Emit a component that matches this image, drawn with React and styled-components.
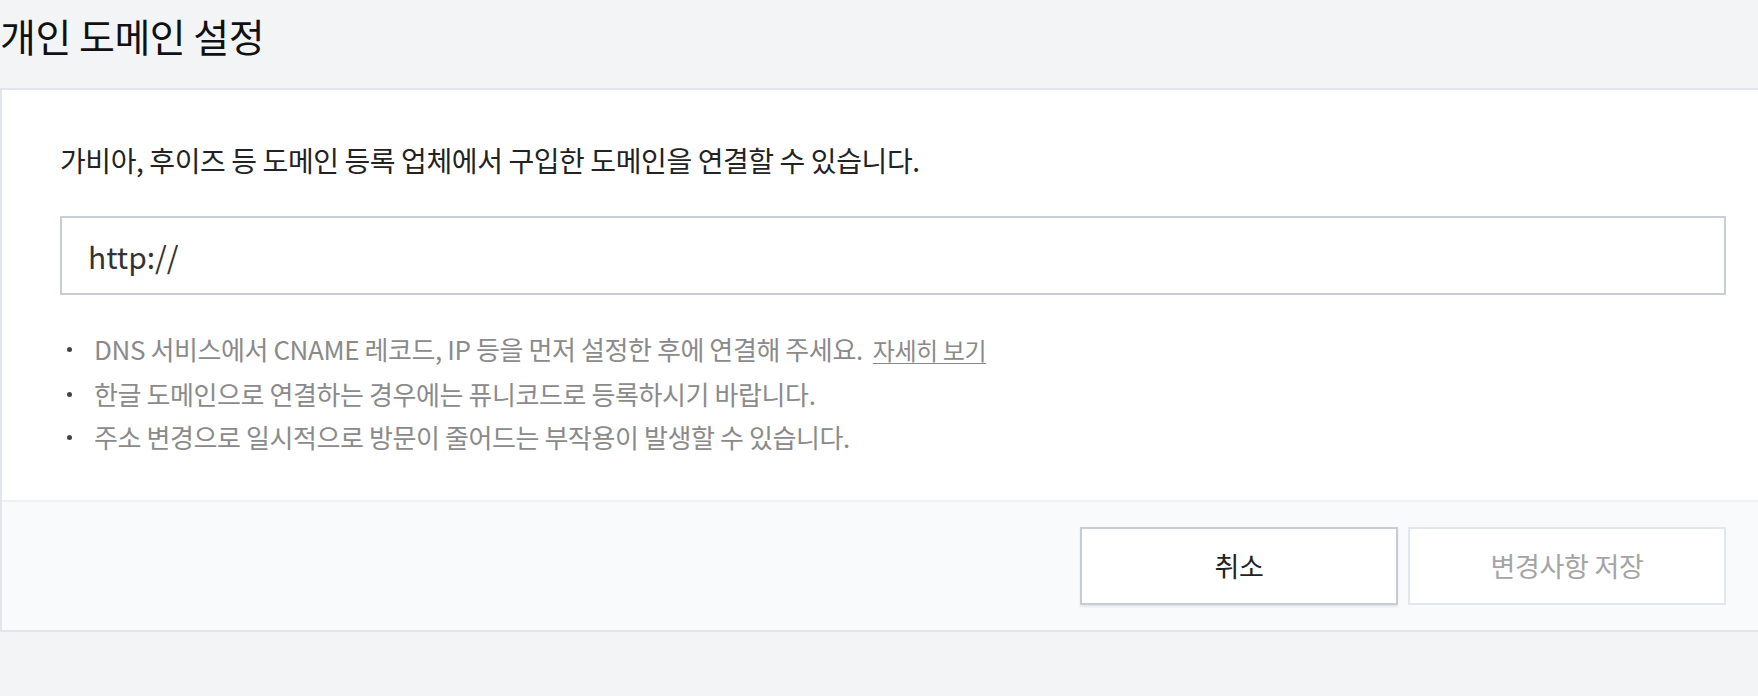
import React from 'react'
import styled, { createGlobalStyle } from 'styled-components'

const GlobalStyle = createGlobalStyle`
  html, body {
    margin: 0;
    padding: 0;
    background: #f3f4f6;
    font-family: "Noto Sans CJK KR", "Noto Sans", sans-serif;
    color: #222;
  }
  * { box-sizing: border-box; }
`

const Page = styled.div`
  width: 100%;
  min-height: 696px;
`

const Title = styled.h1`
  margin: 0;
  height: 88px;
  padding-top: 8px;
  font-size: 39px;
  font-weight: 400;
  line-height: 54px;
  letter-spacing: -0.5px;
  color: #111;
`

const Card = styled.section`
  background: #fff;
  border: 2px solid #e1e5ec;
  border-right: none;
`

const Body = styled.div`
  padding: 51px 32px 41px 58px;
  border-bottom: 2px solid #eef0f4;
`

const Lead = styled.p`
  margin: 0 0 37px;
  font-size: 28px;
  line-height: 38px;
  letter-spacing: -0.4px;
  color: #222;
`

const UrlInput = styled.input`
  display: block;
  width: 100%;
  height: 79px;
  padding: 0 26px;
  border: 2px solid #c8ced8;
  border-radius: 0;
  outline: none;
  font-family: inherit;
  font-size: 30px;
  color: #333;
  background: #fff;

  &::placeholder {
    color: #333;
  }
`

const Notes = styled.ul`
  list-style: none;
  margin: 32px 0 0;
  padding: 0;
`

const Note = styled.li`
  position: relative;
  padding-left: 34px;
  font-size: 26px;
  line-height: 43.5px;
  letter-spacing: -0.4px;
  color: #8a8a8a;

  &::before {
    content: '';
    position: absolute;
    left: 7px;
    top: 20px;
    width: 5px;
    height: 5px;
    border-radius: 50%;
    background: #444;
  }
`

const MoreLink = styled.a`
  margin-left: 10px;
  font-size: 24px;
  color: #8a8a8a;
  text-decoration: underline;
  text-decoration-thickness: 1px;
  text-underline-offset: 3px;
  cursor: pointer;
`

const Footer = styled.div`
  display: flex;
  justify-content: flex-end;
  gap: 10px;
  padding: 25px 32px 25px 0;
  background: #f9fafb;
`

const Button = styled.button`
  width: 318px;
  height: 78px;
  background: #fff;
  border: 2px solid ${p => (p.$primary ? '#c5ccd6' : '#e2e6ee')};
  box-shadow: ${p => (p.$primary ? '0 2px 2px rgba(0,0,0,0.08)' : 'none')};
  font-family: inherit;
  font-size: 27px;
  letter-spacing: -0.3px;
  color: ${p => (p.$primary ? '#222' : '#a4a4a4')};
  cursor: ${p => (p.disabled ? 'default' : 'pointer')};
`

export default function App() {
  return (
    <Page>
      <GlobalStyle />
      <Title>개인 도메인 설정</Title>
      <Card>
        <Body>
          <Lead>가비아, 후이즈 등 도메인 등록 업체에서 구입한 도메인을 연결할 수 있습니다.</Lead>
          <UrlInput placeholder="http://" />
          <Notes>
            <Note>
              DNS 서비스에서 CNAME 레코드, IP 등을 먼저 설정한 후에 연결해 주세요.
              <MoreLink>자세히 보기</MoreLink>
            </Note>
            <Note>한글 도메인으로 연결하는 경우에는 퓨니코드로 등록하시기 바랍니다.</Note>
            <Note>주소 변경으로 일시적으로 방문이 줄어드는 부작용이 발생할 수 있습니다.</Note>
          </Notes>
        </Body>
        <Footer>
          <Button $primary>취소</Button>
          <Button disabled>변경사항 저장</Button>
        </Footer>
      </Card>
    </Page>
  )
}
